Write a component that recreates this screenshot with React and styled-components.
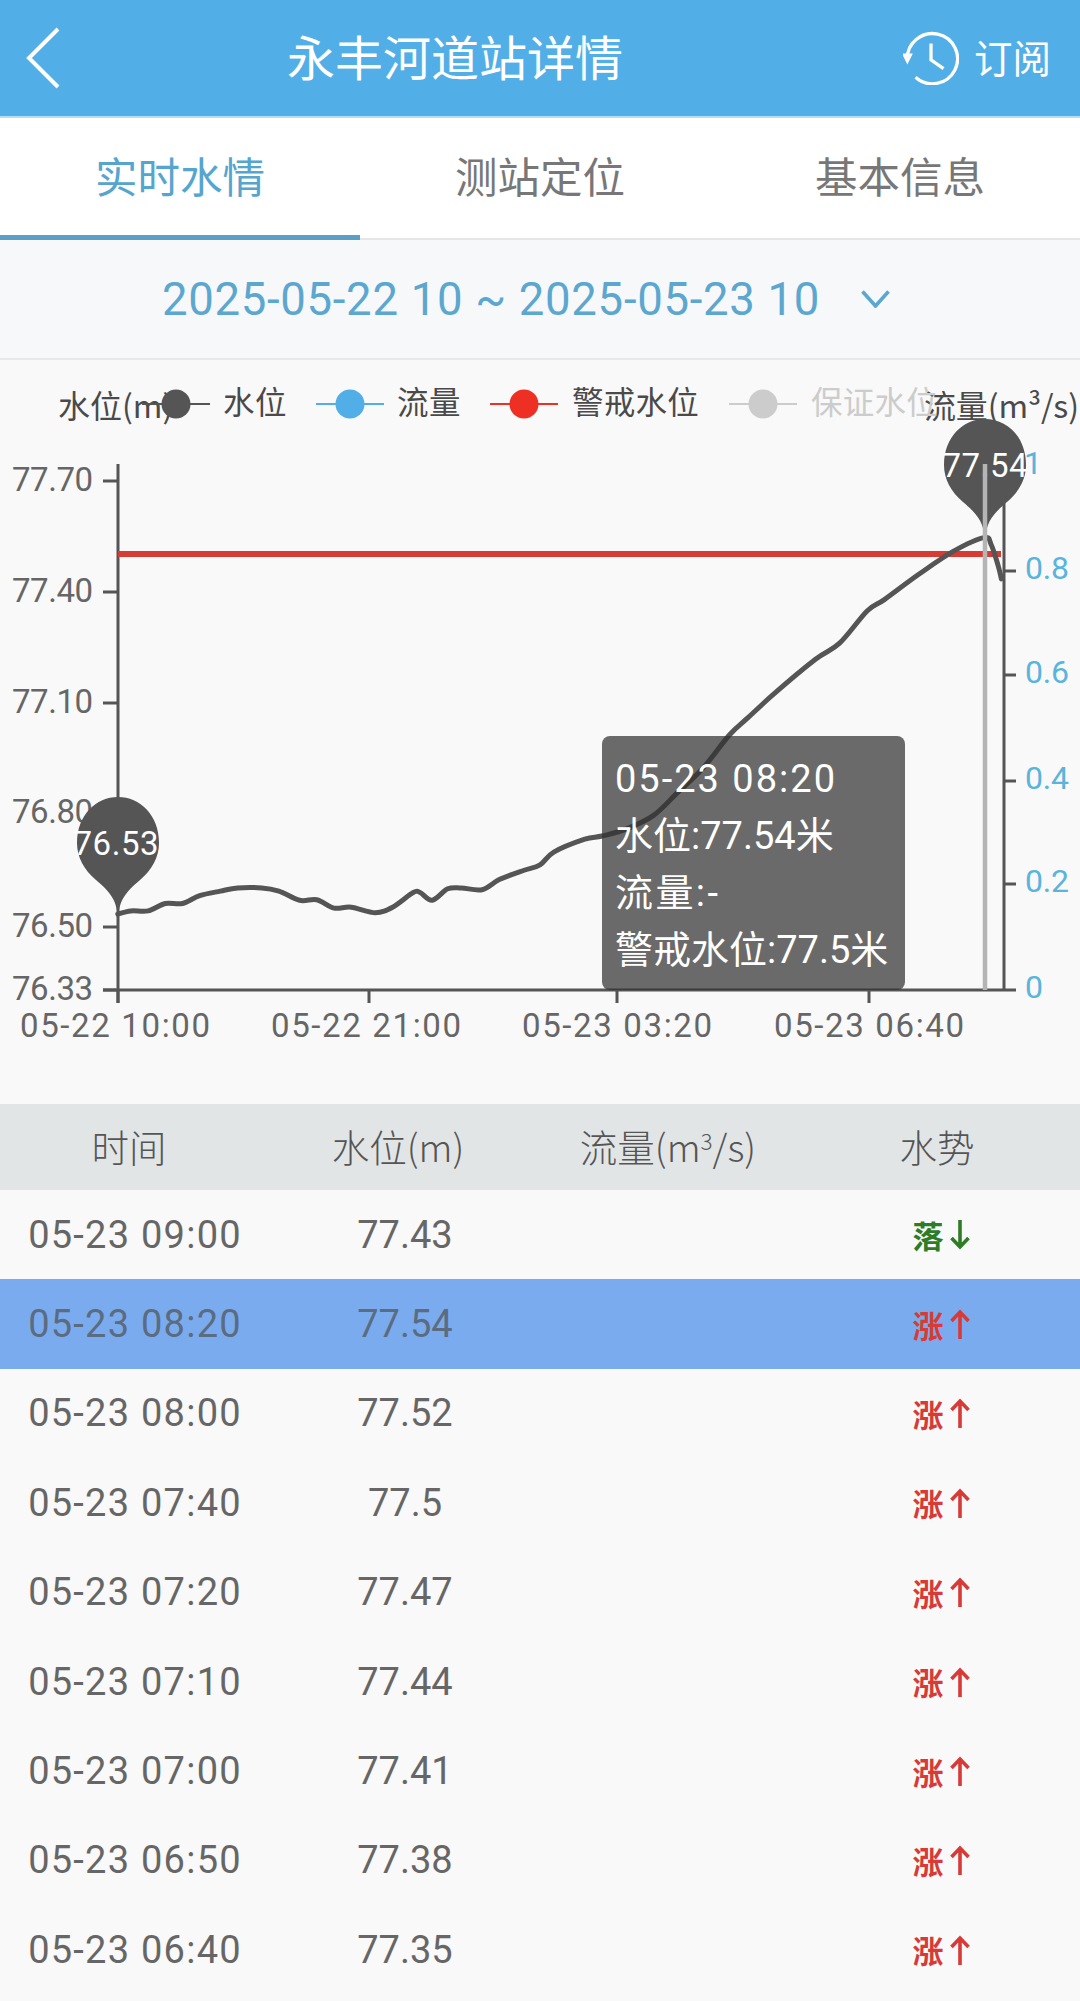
import React from "react";
import styled, { createGlobalStyle } from "styled-components";

const Global = createGlobalStyle`
  html, body { margin: 0; padding: 0; background: #f9f9f9; }
  body { font-family: Roboto, "Liberation Sans", "Noto Sans CJK SC", sans-serif; width: 1080px; height: 2001px; overflow: hidden; }
`;

const Page = styled.div`width: 1080px; height: 2001px; overflow: hidden; background: #f9f9f9; display: flex; flex-direction: column;`;

const Header = styled.header`
  height: 118px; box-sizing: border-box; background: #52aee7; border-bottom: 2px solid #b5def6;
  display: flex; align-items: center; padding: 0 29px 0 26px; color: #fff; flex: none;
`;
const Title = styled.h1`margin: 0 0 6px 227px; font-size: 48px; font-weight: 400; line-height: 1; font-family: "Noto Sans CJK SC", sans-serif;`;
const Subscribe = styled.div`margin-left: auto; display: flex; align-items: center; gap: 15px; font-size: 38.5px; line-height: 1; font-family: "Noto Sans CJK SC", sans-serif; font-weight: 400;`;
const SubscribeText = styled.span`margin-bottom: 4px;`;
const BackIcon = styled.svg`flex: none;`;
const ClockIcon = styled.svg`flex: none; margin-bottom: 2px;`;

const Tabs = styled.nav`height: 122px; box-sizing: border-box; flex: none; background: #fff; border-bottom: 2px solid #e6e6e6; display: grid; grid-template-columns: repeat(3, 1fr);`;
const Tab = styled.div`
  display: flex; align-items: center; justify-content: center; font-size: 42.5px; font-family: "Noto Sans CJK SC", sans-serif; font-weight: 400;
  color: ${p => (p.$active ? "#55a5cf" : "#777")};
  height: 122px; box-sizing: border-box; padding-bottom: 5px;
  border-bottom: 5px solid ${p => (p.$active ? "#5a9fc6" : "transparent")};
`;

const DateBar = styled.div`
  height: 120px; box-sizing: border-box; flex: none; background: #f7f8f9; border-bottom: 2px solid #e8e8e8;
  display: flex; align-items: center; justify-content: center; gap: 41px; padding-right: 28px; color: #5ca7cf; font-size: 45.5px; letter-spacing: 0.7px;
`;

const ChartBox = styled.section`position: relative; height: 744px; flex: none; background: #f9f9f9;`;
const ChartSvg = styled.svg`display: block;`;
const Label = styled.text`
  font-family: ${p => (p.$cjk ? '"Noto Sans CJK SC", sans-serif' : 'Roboto, "Noto Sans CJK SC", sans-serif')};
  font-size: ${p => p.$size || 32}px;
  fill: ${p => p.$color || "#666"};
  dominant-baseline: central;
`;
const Tooltip = styled.div`
  position: absolute; left: 602px; top: 376px; width: 303px; height: 254px; box-sizing: border-box;
  background: rgba(50, 50, 50, 0.72); border-radius: 8px; padding: 15px 13px; color: #fff;
  font-size: 38px; line-height: 57px; font-family: Roboto, "Noto Sans CJK SC", sans-serif; white-space: nowrap;
`;
const TipLine = styled.div`letter-spacing: ${p => p.$spacing || 0}px;`;

const Table = styled.section`flex: none;`;
const Cols = styled.div`
  display: grid; align-items: center;
  grid-template-columns: ${p => (p.$head ? "258px 280px 260px 278px" : "repeat(4, 1fr)")};
  height: ${p => (p.$head ? "86px" : "89.4px")};
  box-sizing: border-box;
  padding-bottom: ${p => (p.$head ? 4 : 0)}px;
  background: ${p => (p.$head ? "#e2e5e6" : p.$active ? "#7aabee" : "transparent")};
  font-size: ${p => (p.$head ? 37.5 : 38)}px;
  color: ${p => (p.$head ? "#555" : p.$active ? "#5b6b80" : "#666")};
  font-family: ${p => (p.$head ? '"Noto Sans CJK SC", sans-serif' : 'Roboto, "Noto Sans CJK SC", sans-serif')};
  font-weight: ${p => (p.$head ? 300 : 400)};
`;
const Cell = styled.div`text-align: center; white-space: nowrap; letter-spacing: ${p => p.$spacing || 0}px;`;
const Sup = styled.span`font-size: 0.6em; vertical-align: 0.55em; line-height: 0;`;
const Trend = styled.div`
  display: flex; align-items: center; justify-content: center; gap: 6px; padding-right: 8px;
  font-family: "Noto Sans CJK SC", sans-serif; font-weight: 700; font-size: 31px; line-height: 1;
  color: ${p => (p.$up ? "#d83a37" : "#2e7d25")};
`;

const left = [[342,1185],[380,1178],[430,1178],[480,1162],[530,1162],[580,1145],[640,1135],[690,1128],[760,1128],[810,1135],[870,1155],[920,1154],[970,1172],[1020,1170],[1090,1182],[1140,1170],[1200,1138],[1220,1138],[1255,1155],[1300,1130],[1340,1128],[1400,1132],[1450,1110],[1520,1090]]
  .map(([x, y]) => [x / 2.904, y / 2.178 + 370]);
const right = [[0,1078],[40,1050],[130,1022],[180,1015],[250,1000],[330,970],[400,920],[470,870],[550,795],[600,760],[680,705],[800,630],[870,595],[950,525],[1000,500],[1100,445],[1200,395],[1290,365],[1310,380],[1330,425],[1340,455]]
  .map(([x, y]) => [x / 2.904 + 540, y / 2.178 + 370]);
const linePts = [...left, ...right];

function smooth(pts) {
  let d = `M${pts[0][0].toFixed(1)} ${pts[0][1].toFixed(1)}`;
  for (let i = 0; i < pts.length - 1; i++) {
    const p0 = pts[Math.max(i - 1, 0)], p1 = pts[i], p2 = pts[i + 1], p3 = pts[Math.min(i + 2, pts.length - 1)];
    const c1 = [p1[0] + (p2[0] - p0[0]) / 6, p1[1] + (p2[1] - p0[1]) / 6];
    const c2 = [p2[0] - (p3[0] - p1[0]) / 6, p2[1] - (p3[1] - p1[1]) / 6];
    d += `C${c1[0].toFixed(1)} ${c1[1].toFixed(1)} ${c2[0].toFixed(1)} ${c2[1].toFixed(1)} ${p2[0].toFixed(1)} ${p2[1].toFixed(1)}`;
  }
  return d;
}

const Pin = ({ x, y, tx, text }) => (
  <g>
    <path transform={`translate(${x} ${y})`} fill="#555" d="M0 73C-2 56 -8 49 -22 37C-34 27 -41 14 -41 0C-41 -28 -22 -46 0 -46C22 -46 41 -28 41 0C41 14 34 27 22 37C8 49 2 56 0 73Z" />
    <Label x={tx} y={y} $color="#fff" $size={33} textAnchor="middle" textLength={85} lengthAdjust="spacing">{text}</Label>
  </g>
);

const LegendItem = ({ x, color, text, textX, textColor, lineW = 2 }) => (
  <g>
    <line x1={x - 34} x2={x + 34} y1={404} y2={404} stroke={color} strokeWidth={lineW} />
    <circle cx={x} cy={404} r={14.5} fill={color} />
    <Label x={textX} y={400} $cjk $size={31.5} $color={textColor} textLength={(text.length * 31.7)} lengthAdjust="spacing">{text}</Label>
  </g>
);

const Chart = () => {
  const leftTicks = [["77.70", 481], ["77.40", 592], ["77.10", 703], ["76.80", 813], ["76.50", 927], ["76.33", 990]];
  const rightTicks = [["0.8", 571], ["0.6", 675], ["0.4", 781], ["0.2", 884]];
  const xTicks = [[118, "05-22 10:00", 115], [369, "05-22 21:00", 366], [617, "05-23 03:20", 617], [869, "05-23 06:40", 869]];
  return (
    <ChartBox>
      <ChartSvg width="1080" height="744" viewBox="0 360 1080 744">
        <Label x={58} y={404} $cjk $size={32} $color="#4a4a4a">水位(m)</Label>
        <Label x={924} y={404} $cjk $size={32} $color="#4a4a4a" textLength={155} lengthAdjust="spacing">流量(m³/s)</Label>
        <LegendItem x={176} color="#555" text="水位" textX={223} textColor="#4a4a4a" />
        <LegendItem x={350} color="#52aee7" text="流量" textX={397} textColor="#4a4a4a" />
        <LegendItem x={524} color="#ee3024" text="警戒水位" textX={572} textColor="#4a4a4a" />
        <LegendItem x={763} color="#ccc" text="保证水位" textX={811} textColor="#ccc" />

        {leftTicks.map(([t, y]) => (
          <g key={t}>
            <line x1={103} x2={118} y1={y} y2={y} stroke="#555" strokeWidth={3} />
            <Label x={93} y={y - 2} textAnchor="end" $size={33} textLength={81} lengthAdjust="spacing">{t}</Label>
          </g>
        ))}
        <line x1={118} x2={118} y1={464} y2={1003} stroke="#555" strokeWidth={3} />
        <line x1={103} x2={1016} y1={990} y2={990} stroke="#555" strokeWidth={3} />
        <line x1={1004} x2={1004} y1={501} y2={990} stroke="#555" strokeWidth={3} />
        {rightTicks.map(([t, y]) => (
          <g key={t}>
            <line x1={1004} x2={1016} y1={y} y2={y} stroke="#555" strokeWidth={3} />
            <Label x={1025} y={y - 3} $size={32} $color="#5ab4dc" textLength={44} lengthAdjust="spacing">{t}</Label>
          </g>
        ))}
        <Label x={1024} y={463} $size={32} $color="#5ab4dc">1</Label>
        <Label x={1025} y={987} $size={32} $color="#5ab4dc">0</Label>
        {xTicks.map(([x, t, c]) => (
          <g key={t}>
            <line x1={x} x2={x} y1={990} y2={1003} stroke="#555" strokeWidth={3} />
            <Label x={c} y={1025} textAnchor="middle" $size={33} textLength={190} lengthAdjust="spacing">{t}</Label>
          </g>
        ))}
        <line x1={118} x2={1001} y1={554} y2={554} stroke="#d63c33" strokeWidth={6} />
        <path d={smooth(linePts)} fill="none" stroke="#555" strokeWidth={5} strokeLinejoin="round" strokeLinecap="round" />
        <Pin x={118} y={843} tx={116} text="76.53" />
        <Pin x={985} y={465} tx={985} text="77.54" />
        <line x1={985} x2={985} y1={464} y2={990} stroke="#b5b5b5" strokeWidth={4.5} />
      </ChartSvg>
      <Tooltip>
        <TipLine $spacing={2}>05-23 08:20</TipLine>
        <TipLine>水位:77.54米</TipLine>
        <TipLine $spacing={2.4}>流量:-</TipLine>
        <TipLine>警戒水位:77.5米</TipLine>
      </Tooltip>
    </ChartBox>
  );
};

const Arrow = ({ up }) => (
  <svg width="20" height="30" viewBox="0 0 20 30" fill="none" stroke="currentColor" strokeWidth="3.6">
    {up
      ? <path d="M10 30V3M1.5 12L10 3L18.5 12" />
      : <path d="M10 0V27M1.5 18L10 27L18.5 18" />}
  </svg>
);

const rows = [
  ["05-23 09:00", "77.43", false],
  ["05-23 08:20", "77.54", true, true],
  ["05-23 08:00", "77.52", true],
  ["05-23 07:40", "77.5", true],
  ["05-23 07:20", "77.47", true],
  ["05-23 07:10", "77.44", true],
  ["05-23 07:00", "77.41", true],
  ["05-23 06:50", "77.38", true],
  ["05-23 06:40", "77.35", true],
];

export default function App() {
  return (
    <Page>
      <Global />
      <Header>
        <BackIcon width="34" height="62" viewBox="0 0 34 62" fill="none" stroke="#fff" strokeWidth="4">
          <path d="M32 2L3 31L32 60" />
        </BackIcon>
        <Title>永丰河道站详情</Title>
        <Subscribe>
          <ClockIcon width="56" height="56" viewBox="0 0 58 58" fill="none" stroke="#fff" strokeWidth="3.4">
            <path d="M4.5 32A26 26 0 1 1 13 50" />
            <path d="M29 15V32L42 41" />
            <path d="M0 26L9 26L4.5 35Z" fill="#fff" strokeWidth="1.5" />
          </ClockIcon>
          <SubscribeText>订阅</SubscribeText>
        </Subscribe>
      </Header>
      <Tabs>
        <Tab $active>实时水情</Tab>
        <Tab>测站定位</Tab>
        <Tab>基本信息</Tab>
      </Tabs>
      <DateBar>
        <span>2025-05-22 10 ~ 2025-05-23 10</span>
        <svg width="29" height="18" viewBox="0 0 29 18" fill="none" stroke="#5ca7cf" strokeWidth="3.6">
          <path d="M1.5 1.5L14.5 16L27.5 1.5" />
        </svg>
      </DateBar>
      <Chart />
      <Table>
        <Cols $head>
          <Cell>时间</Cell>
          <Cell>水位(m)</Cell>
          <Cell>流量(m<Sup>3</Sup>/s)</Cell>
          <Cell>水势</Cell>
        </Cols>
        {rows.map(([t, v, up, active]) => (
          <Cols key={t} $active={active}>
            <Cell $spacing={1.25}>{t}</Cell>
            <Cell>{v}</Cell>
            <Cell />
            <Trend $up={up}>
              <span>{up ? "涨" : "落"}</span>
              <Arrow up={up} />
            </Trend>
          </Cols>
        ))}
      </Table>
    </Page>
  );
}
